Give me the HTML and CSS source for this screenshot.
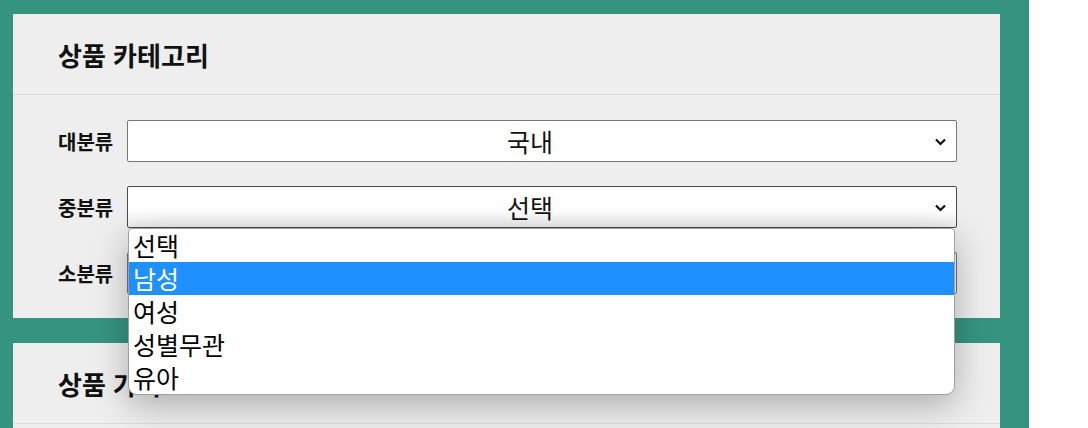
FILE: index.html
```html
<!DOCTYPE html>
<html lang="ko">
<head>
  <meta charset="UTF-8">
  <meta name="viewport" content="width=device-width, initial-scale=1.0">
  <title>상품 등록</title>
  <link rel="stylesheet" href="styles.css">
</head>
<body>
  <div class="page">
    <div class="card">
      <h2 class="card-title">상품 카테고리</h2>
      <div class="card-body">
        <div class="field">
          <label>대분류</label>
          <div class="select">
            <span>국내</span>
            <svg class="chevron" viewBox="0 0 12 8"><path d="M1.5 1.5 L6 6 L10.5 1.5" fill="none" stroke="#111" stroke-width="2.2"/></svg>
          </div>
        </div>

        <div class="field">
          <label>중분류</label>
          <div class="select-wrap">
            <div class="select open">
              <span>선택</span>
              <svg class="chevron" viewBox="0 0 12 8"><path d="M1.5 1.5 L6 6 L10.5 1.5" fill="none" stroke="#111" stroke-width="2.2"/></svg>
            </div>
            <ul class="options">
              <li>선택</li>
              <li class="active">남성</li>
              <li>여성</li>
              <li>성별무관</li>
              <li>유아</li>
            </ul>
          </div>
        </div>

        <div class="field">
          <label>소분류</label>
          <div class="select">
            <span>선택</span>
            <svg class="chevron" viewBox="0 0 12 8"><path d="M1.5 1.5 L6 6 L10.5 1.5" fill="none" stroke="#111" stroke-width="2.2"/></svg>
          </div>
        </div>
      </div>
    </div>

    <div class="card">
      <h2 class="card-title">상품 가격</h2>
      <div class="card-body"></div>
    </div>
  </div>
</body>
</html>
```

FILE: styles.css
```css
body {
  margin: 0;
  background: white;
  font-family: "Noto Sans CJK KR", "Noto Sans", sans-serif;
  color: #111;
  overflow: hidden;
}

.page {
  width: 987px;
  padding: 14px 29px 20px 13px;
  background: #359480;
  display: flex;
  flex-direction: column;
  gap: 25px;
}

.card {
  background: #eeeeee;
}

.card-title {
  margin: 0;
  height: 80px;
  padding-left: 45px;
  display: flex;
  align-items: center;
  font-size: 26px;
  font-weight: bold;
  border-bottom: 1px solid #dcdcdc;
}

.card-body {
  padding: 25px 43px 24px 45px;
  display: flex;
  flex-direction: column;
  gap: 24px;
}

.field {
  display: flex;
  align-items: center;
}

.field label {
  width: 69px;
  flex-shrink: 0;
  font-size: 20px;
  font-weight: bold;
}

.select-wrap {
  position: relative;
  flex: 1;
  display: flex;
}

.select {
  flex: 1;
  height: 40px;
  padding-right: 24px;
  position: relative;
  display: flex;
  align-items: center;
  justify-content: center;
  background: white;
  border: 1px solid #767676;
  border-radius: 2px;
  font-size: 25px;
}

.select.open {
  border-color: #4a4a4a;
  background: linear-gradient(#ffffff 60%, #ececec);
}

.chevron {
  position: absolute;
  right: 9px;
  top: 17px;
  width: 13px;
  height: 8px;
}

.options {
  position: absolute;
  top: 100%;
  left: 1px;
  right: 2px;
  margin: 0;
  padding: 0;
  list-style: none;
  background: white;
  border: 1px solid #a0a0a0;
  border-radius: 4px 4px 9px 9px;
  box-shadow: 0 10px 34px rgba(0, 0, 0, 0.28);
  z-index: 10;
}

.options li {
  height: 33px;
  line-height: 33px;
  padding-left: 4px;
  font-size: 25px;
  color: #000;
}

.options li.active {
  background: #1e90ff;
  color: white;
}
```
